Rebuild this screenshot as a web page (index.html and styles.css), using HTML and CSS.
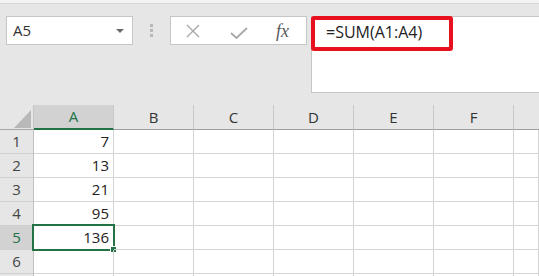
FILE: index.html
```html
<!DOCTYPE html>
<html>
<head>
<meta charset="utf-8">
<link rel="stylesheet" href="styles.css">
</head>
<body>
<div class="top-strip"></div>
<div class="toolbar">
  <div class="namebox">
    <span class="name">A5</span>
    <svg class="caret" width="8" height="4" viewBox="0 0 8 4"><path d="M0 0H8L4 4Z" fill="#6a6a6a"/></svg>
  </div>
  <div class="grip"><i></i><i></i><i></i></div>
  <div class="fbuttons">
    <svg class="ico" width="14" height="14" viewBox="0 0 14 14"><path d="M1 1L13 13M13 1L1 13" stroke="#a8a8a8" stroke-width="1.4" fill="none"/></svg>
    <svg class="ico" width="18" height="12" viewBox="0 0 18 12"><path d="M1 6L6.5 11L17 1" stroke="#a8a8a8" stroke-width="1.8" fill="none"/></svg>
    <span class="fx">fx</span>
  </div>
  <div class="formula">
    <span class="ftext">=SUM(A1:A4)</span>
    <div class="highlight"></div>
  </div>
</div>
<div class="sheet">
  <div class="corner"><svg width="17" height="18" viewBox="0 0 17 18"><path d="M17 0V18H0Z" fill="#b9b9b9"/></svg></div>
  <div class="ch ch-sel">A</div>
  <div class="ch">B</div>
  <div class="ch">C</div>
  <div class="ch">D</div>
  <div class="ch">E</div>
  <div class="ch">F</div>
  <div class="ch ch-last"></div>

  <div class="rh">1</div><div class="c num">7</div><div class="c"></div><div class="c"></div><div class="c"></div><div class="c"></div><div class="c"></div><div class="c"></div>
  <div class="rh">2</div><div class="c num">13</div><div class="c"></div><div class="c"></div><div class="c"></div><div class="c"></div><div class="c"></div><div class="c"></div>
  <div class="rh">3</div><div class="c num">21</div><div class="c"></div><div class="c"></div><div class="c"></div><div class="c"></div><div class="c"></div><div class="c"></div>
  <div class="rh">4</div><div class="c num">95</div><div class="c"></div><div class="c"></div><div class="c"></div><div class="c"></div><div class="c"></div><div class="c"></div>
  <div class="rh rh-sel">5</div><div class="c num active">136<div class="sel"><span class="handle"></span></div></div><div class="c"></div><div class="c"></div><div class="c"></div><div class="c"></div><div class="c"></div><div class="c"></div>
  <div class="rh">6</div><div class="c"></div><div class="c"></div><div class="c"></div><div class="c"></div><div class="c"></div><div class="c"></div><div class="c"></div>
  <div class="rh"></div><div class="c"></div><div class="c"></div><div class="c"></div><div class="c"></div><div class="c"></div><div class="c"></div><div class="c"></div>
</div>
</body>
</html>
```
FILE: styles.css
```css
html, body {
  margin: 0;
  padding: 0;
  width: 539px;
  height: 276px;
  overflow: hidden;
  background: #e6e6e6;
  font-family: "Open Sans", "Liberation Sans", sans-serif;
}

.top-strip {
  height: 3px;
  background: #f3f3f3;
  border-bottom: 1px solid #d9d9d9;
}

.toolbar {
  height: 101px;
  box-sizing: border-box;
  padding: 12px 0 0 6px;
  display: flex;
  align-items: flex-start;
  background: #e6e6e6;
}

.namebox {
  width: 127px;
  height: 29px;
  box-sizing: border-box;
  background: #fff;
  border: 1px solid #c6c6c6;
  display: flex;
  align-items: center;
  justify-content: space-between;
  padding: 0 8px 0 6px;
}

.name {
  font-size: 15px;
  color: #333;
  line-height: 1;
}

.caret {
  display: block;
  margin-top: 1px;
}

.grip {
  width: 37px;
  height: 29px;
  display: flex;
  flex-direction: column;
  align-items: center;
  justify-content: center;
  gap: 2px;
}

.grip i {
  display: block;
  width: 3px;
  height: 3px;
  background: #b8b8b8;
}

.fbuttons {
  width: 137px;
  height: 29px;
  box-sizing: border-box;
  background: #fff;
  border: 1px solid #c6c6c6;
  display: flex;
  align-items: center;
  padding: 0 0 0 15px;
}

.fbuttons .ico {
  display: block;
}

.fbuttons .ico:first-child {
  margin-top: 1px;
}

.fbuttons .ico:nth-child(2) {
  margin-left: 30px;
  margin-top: 4px;
}

.fx {
  margin-left: 28px;
  font-family: "Liberation Serif", "DejaVu Serif", serif;
  font-style: italic;
  font-size: 18px;
  color: #5a5a5a;
  line-height: 1;
  margin-top: 1px;
}

.formula {
  position: relative;
  margin-left: 4px;
  flex: 1;
  height: 77px;
  box-sizing: border-box;
  background: #fff;
  border: 1px solid #c6c6c6;
  border-right: none;
  padding: 4px 0 0 14px;
}

.ftext {
  font-size: 16px;
  color: #222;
  line-height: 20px;
}

.highlight {
  position: absolute;
  left: -1px;
  top: -1px;
  width: 142px;
  height: 35px;
  box-sizing: border-box;
  border: 4px solid #e8101e;
  border-radius: 3px;
}

.sheet {
  display: grid;
  grid-template-columns: 34px repeat(6, 80px) 1fr;
  grid-template-rows: 25px repeat(7, 24px);
  background: #fff;
}

.corner {
  background: #e6e6e6;
  border-right: 1px solid #c6c6c6;
  border-bottom: 1px solid #a6a6a6;
  display: flex;
  align-items: flex-end;
  justify-content: flex-end;
  padding: 0 2px 1px 0;
}

.corner svg {
  display: block;
}

.ch {
  background: #e6e6e6;
  border-right: 1px solid #c8c8c8;
  border-bottom: 1px solid #9e9e9e;
  text-align: center;
  font-size: 15px;
  line-height: 24px;
  color: #333;
}

.ch-last {
  border-right: none;
}

.ch-sel {
  background: #d2d2d2;
  color: #217346;
  border-bottom: 2px solid #217346;
  line-height: 23px;
}

.rh {
  background: #e6e6e6;
  border-right: 1px solid #c0c0c0;
  border-bottom: 1px solid #d0d0d0;
  text-align: center;
  font-size: 15px;
  line-height: 23px;
  color: #444;
}

.rh-sel {
  background: #d2d2d2;
  color: #217346;
}

.c {
  border-right: 1px solid #d4d4d4;
  border-bottom: 1px solid #d4d4d4;
  font-size: 15px;
  line-height: 23px;
  color: #222;
  position: relative;
}

.num {
  text-align: right;
  padding-right: 4px;
}

.sel {
  position: absolute;
  left: -2px;
  top: -2px;
  width: 83px;
  height: 27px;
  box-sizing: border-box;
  border: 2px solid #217346;
}

.handle {
  position: absolute;
  right: -4px;
  bottom: -4px;
  width: 5px;
  height: 5px;
  background: #217346;
  border: 1px solid #fff;
}
```
